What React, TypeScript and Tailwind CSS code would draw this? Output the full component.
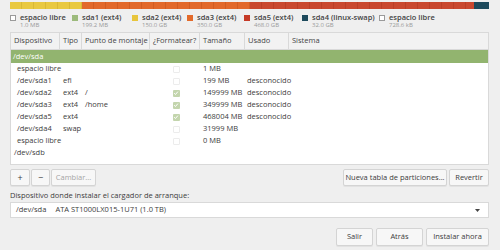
import React from "react";

const cols = "grid grid-cols-[49px_22px_68px_50px_45px_44px_1fr]";

const legend = [
    { name: "espacio libre", size: "1.0 MB", color: "", w: "w-[62px]" },
    { name: "sda1 (ext4)", size: "199.2 MB", color: "bg-[#9cba7c]", w: "w-[60px]" },
    { name: "sda2 (ext4)", size: "150.0 GB", color: "bg-[#e8c53c]", w: "w-[55px]" },
    { name: "sda3 (ext4)", size: "350.0 GB", color: "bg-[#e36a2a]", w: "w-[57px]" },
    { name: "sda5 (ext4)", size: "468.0 GB", color: "bg-[#c53a27]", w: "w-[58px]" },
    { name: "sda4 (linux-swap)", size: "32.0 GB", color: "bg-[#1d4a5c]", w: "w-[77px]" },
    { name: "espacio libre", size: "728.6 kB", color: "", w: "" },
];

const rows = [
    { dev: "espacio libre", type: "", mount: "", fmt: false, size: "1 MB", used: "" },
    { dev: "/dev/sda1", type: "efi", mount: "", fmt: false, size: "199 MB", used: "desconocido" },
    { dev: "/dev/sda2", type: "ext4", mount: "/", fmt: true, size: "149999 MB", used: "desconocido" },
    { dev: "/dev/sda3", type: "ext4", mount: "/home", fmt: true, size: "349999 MB", used: "desconocido" },
    { dev: "/dev/sda5", type: "ext4", mount: "", fmt: true, size: "468004 MB", used: "desconocido" },
    { dev: "/dev/sda4", type: "swap", mount: "", fmt: false, size: "31999 MB", used: "" },
    { dev: "espacio libre", type: "", mount: "", fmt: false, size: "0 MB", used: "" },
];

const Check = ({ on }: { on: boolean }) => (
    <div
        className={
            on
                ? "w-[7px] h-[7px] rounded-[1px] bg-[#c3d5ad] flex items-center justify-center"
                : "w-[7px] h-[7px] rounded-[1px] border border-[#ececec] bg-white"
        }
    >
        {on && (
            <svg viewBox="0 0 8 8" width="6" height="6" fill="none" stroke="white" strokeWidth="1.3">
                <path d="M1.5 4.2l1.8 1.8 3.2-3.8" />
            </svg>
        )}
    </div>
);

const Btn = ({ children, className = "" }: { children: React.ReactNode; className?: string }) => (
    <div
        className={`flex items-center justify-center border border-[#d4d4d4] rounded-[2px] bg-[#f7f7f7] shadow-[0_1px_0_#e2e2e2] ${className}`}
    >
        {children}
    </div>
);

export default function App() {
    return (
        <div
            className="w-[500px] h-[250px] bg-[#efefef] pl-[10px] pr-[11px] text-[7.5px] text-[#3c3c3c] overflow-hidden"
            style={{ fontFamily: '"Open Sans", "Noto Sans", sans-serif' }}
        >
            {/* disk bar */}
            <div className="mt-[2px] h-[7px] flex">
                <div className="w-[72px] bg-[#e9c941] bg-[repeating-linear-gradient(90deg,transparent_0,transparent_11px,#d9b936_11px,#d9b936_12px)]" />
                <div className="w-[168px] bg-[#e2692b] bg-[repeating-linear-gradient(90deg,transparent_0,transparent_11px,#d25d23_11px,#d25d23_12px)]" />
                <div className="w-[224px] bg-[#c9482f] bg-[repeating-linear-gradient(90deg,transparent_0,transparent_11px,#bb3f27_11px,#bb3f27_12px)]" />
                <div className="flex-1 bg-[#1d4a5c]" />
            </div>

            {/* legend */}
            <div className="mt-[3px] flex h-[19px]">
                {legend.map((l, i) => (
                    <div key={i} className={`flex gap-[4px] ${l.w}`}>
                        <div
                            className={`mt-[3px] w-[6px] h-[6px] shrink-0 ${l.color ? l.color : "border border-[#9a9a9a] bg-white"}`}
                        />
                        <div className="leading-[10px] whitespace-nowrap">
                            <div className="font-semibold text-[7.5px] text-[#444]">{l.name}</div>
                            <div className="text-[6px] text-[#9a9a9a] leading-[7px]">{l.size}</div>
                        </div>
                    </div>
                ))}
            </div>

            {/* table */}
            <div className="mt-[1px] h-[133px] border border-[#d9d9d9] bg-white">
                <div className={`${cols} h-[17px] bg-[#f2f2f2] border-b border-[#d9d9d9] text-[#444] font-medium`}>
                    {["Dispositivo", "Tipo", "Punto de montaje", "¿Formatear?", "Tamaño", "Usado", "Sistema"].map(
                        (h, i) => (
                            <div
                                key={h}
                                className={`flex items-center pl-[3px] ${i < 6 ? "border-r border-[#d9d9d9]" : ""}`}
                            >
                                {h}
                            </div>
                        ),
                    )}
                </div>
                <div className="h-[13px] bg-[#92b46f] text-white flex items-center pl-[2px]">/dev/sda</div>
                {rows.map((r, i) => (
                    <div key={i} className={`${cols} h-[12px] items-center`}>
                        <div className="pl-[6px] whitespace-nowrap">{r.dev}</div>
                        <div className="pl-[3px]">{r.type}</div>
                        <div className="pl-[3px]">{r.mount}</div>
                        <div className="flex justify-center pl-[2px]">
                            <Check on={r.fmt} />
                        </div>
                        <div className="pl-[3px] whitespace-nowrap">{r.size}</div>
                        <div className="pl-[2px]">{r.used}</div>
                        <div />
                    </div>
                ))}
                <div className="h-[12px] flex items-center pl-[3px]">/dev/sdb</div>
            </div>

            {/* partition buttons */}
            <div className="mt-[4px] flex h-[17px]">
                <Btn className="w-[20px] text-[9px]">+</Btn>
                <Btn className="w-[19px] text-[9px] ml-[1px]">−</Btn>
                <Btn className="w-[45px] ml-[1px] text-[#a5a5a5]">Cambiar...</Btn>
                <div className="flex-1" />
                <Btn className="w-[104px]">Nueva tabla de particiones...</Btn>
                <Btn className="w-[40px] ml-[2px]">Revertir</Btn>
            </div>

            <div className="mt-[4px] leading-[10px]">Dispositivo donde instalar el cargador de arranque:</div>

            <div className="mt-[2px] h-[16px] border border-[#d9d9d9] bg-white flex items-center pl-[5px] pr-[8px]">
                <span>/dev/sda</span>
                <span className="ml-[9px]">ATA ST1000LX015-1U71 (1.0 TB)</span>
                <div className="flex-1" />
                <svg width="5" height="3" viewBox="0 0 5 3">
                    <path d="M0 0h5L2.5 3z" fill="#444" />
                </svg>
            </div>

            <div className="mt-[10px] flex justify-end h-[18px]">
                <Btn className="w-[37px]">Salir</Btn>
                <Btn className="w-[47px] ml-[3px]">Atrás</Btn>
                <Btn className="w-[63px] ml-[3px]">Instalar ahora</Btn>
            </div>
        </div>
    );
}
